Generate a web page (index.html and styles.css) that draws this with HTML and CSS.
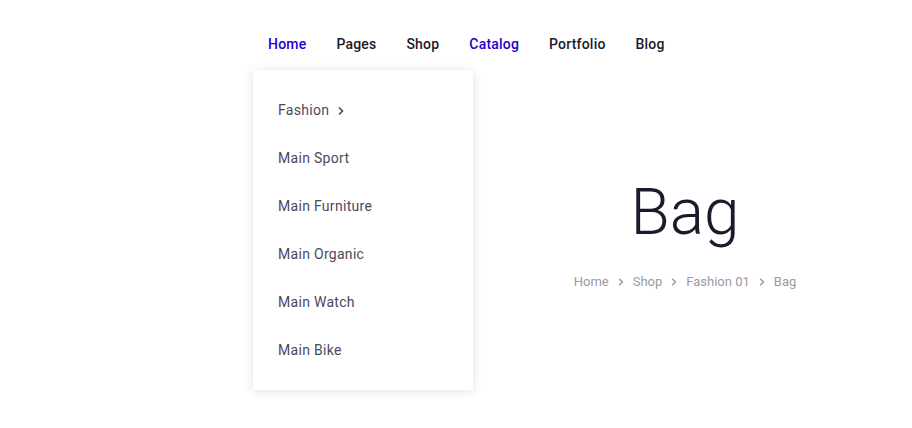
FILE: index.html
```html
<!DOCTYPE html>
<html>
<head>
<meta charset="utf-8">
<link rel="stylesheet" href="styles.css">
</head>
<body>
<header class="header">
  <nav class="nav">
    <ul class="menu">
      <li class="menu-item has-drop">
        <a class="menu-link active" href="#">Home</a>
        <ul class="dropdown">
          <li class="drop-item"><a href="#">Fashion <svg class="chev" width="8" height="10" viewBox="0 0 8 10"><path d="M2 1.5 L5.5 5 L2 8.5" fill="none" stroke="currentColor" stroke-width="1.6"/></svg></a></li>
          <li class="drop-item"><a href="#">Main Sport</a></li>
          <li class="drop-item"><a href="#">Main Furniture</a></li>
          <li class="drop-item"><a href="#">Main Organic</a></li>
          <li class="drop-item"><a href="#">Main Watch</a></li>
          <li class="drop-item"><a href="#">Main Bike</a></li>
        </ul>
      </li>
      <li class="menu-item"><a class="menu-link" href="#">Pages</a></li>
      <li class="menu-item"><a class="menu-link" href="#">Shop</a></li>
      <li class="menu-item"><a class="menu-link active" href="#">Catalog</a></li>
      <li class="menu-item"><a class="menu-link" href="#">Portfolio</a></li>
      <li class="menu-item"><a class="menu-link" href="#">Blog</a></li>
    </ul>
  </nav>
</header>
<main class="hero">
  <div class="hero-left"></div>
  <div class="hero-right">
    <h1 class="title">Bag</h1>
    <div class="crumbs">
      <a href="#">Home</a>
      <svg class="sep" width="8" height="10" viewBox="0 0 8 10"><path d="M2.2 1.8 L5.4 5 L2.2 8.2" fill="none" stroke="currentColor" stroke-width="1.4"/></svg>
      <a href="#">Shop</a>
      <svg class="sep" width="8" height="10" viewBox="0 0 8 10"><path d="M2.2 1.8 L5.4 5 L2.2 8.2" fill="none" stroke="currentColor" stroke-width="1.4"/></svg>
      <a href="#">Fashion 01</a>
      <svg class="sep" width="8" height="10" viewBox="0 0 8 10"><path d="M2.2 1.8 L5.4 5 L2.2 8.2" fill="none" stroke="currentColor" stroke-width="1.4"/></svg>
      <span>Bag</span>
    </div>
  </div>
</main>
</body>
</html>
```

FILE: styles.css
```css
* { box-sizing: border-box; }
html, body { margin: 0; padding: 0; background: #fff; }
body {
  font-family: Roboto, "Liberation Sans", sans-serif;
  width: 912px;
  height: 428px;
  overflow: hidden;
}
a { text-decoration: none; color: inherit; }
ul { list-style: none; margin: 0; padding: 0; }

.header {
  padding-top: 26px;
  padding-left: 253px;
}
.menu { display: flex; }
.menu-item { position: relative; padding: 0 15px; }
.menu-link {
  display: block;
  font-size: 14px;
  font-weight: 500;
  letter-spacing: 0.2px;
  color: #1b1a2b;
  line-height: 36px;
  height: 36px;
}
.menu-link.active { color: #2300c9; }

.dropdown {
  position: absolute;
  top: 44px;
  left: 0;
  width: 220px;
  padding: 16px 0;
  background: #fff;
  box-shadow: 0 1px 10px rgba(0,0,0,0.12);
  z-index: 5;
}
.drop-item a {
  display: flex;
  align-items: center;
  height: 48px;
  padding-left: 25px;
  font-size: 14px;
  letter-spacing: 0.3px;
  color: #4a4a5c;
}
.chev { margin-left: 8px; margin-top: 1px; }

.hero { display: flex; }
.hero-left { width: 458px; }
.hero-right {
  flex: 1;
  display: flex;
  flex-direction: column;
  align-items: center;
  padding-top: 113px;
}
.title {
  margin: 0;
  font-size: 64px;
  font-weight: 300;
  color: #1b1a2b;
  line-height: 76px;
}
.crumbs {
  margin-top: 23px;
  display: flex;
  align-items: center;
  gap: 8px;
  font-size: 13px;
  color: #9a9aa6;
}
.sep { color: #9a9aa6; }
```
